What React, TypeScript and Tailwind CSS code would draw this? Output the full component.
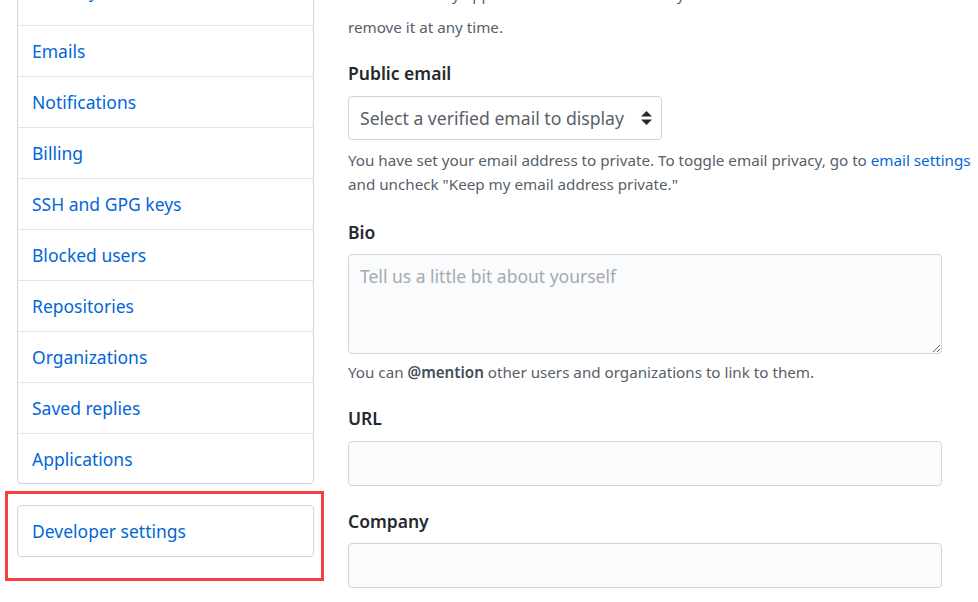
import { useState } from "react"

const navItems = [
  "Security",
  "Emails",
  "Notifications",
  "Billing",
  "SSH and GPG keys",
  "Blocked users",
  "Repositories",
  "Organizations",
  "Saved replies",
  "Applications",
]

function SelectArrows() {
  return (
    <svg width="11" height="14" viewBox="0 0 11 14" className="shrink-0">
      <path d="M5.5 0 L11 5.5 H0 Z" fill="#24292e" />
      <path d="M5.5 14 L11 8.5 H0 Z" fill="#24292e" />
    </svg>
  )
}

export default function App() {
  const [bio, setBio] = useState("")

  return (
    <div
      className="relative w-[978px] h-[602px] overflow-hidden bg-white"
      style={{ fontFamily: '"Noto Sans", "Open Sans", sans-serif' }}
    >
      <div className="flex">
        {/* Sidebar */}
        <div className="w-[297px] ml-[17px] shrink-0">
          <div className="-mt-[26px] border border-[#d1d5da] rounded-b-[4px] bg-white">
            {navItems.map((item, i) => (
              <div
                key={item}
                className={
                  "flex items-center pl-[14px] text-[17.5px] text-[#0366d6] " +
                  (i < navItems.length - 1 ? "h-[51px] border-b border-[#e1e4e8]" : "h-[49px] pt-[2px]")
                }
              >
                <span className={i === 0 ? "relative -top-[9px]" : ""}>{item}</span>
              </div>
            ))}
          </div>

          <div className="mt-[21px] h-[52px] border border-[#d1d5da] rounded-[4px] flex items-center pl-[14px] text-[17.5px] text-[#0366d6]">
            Developer settings
          </div>
        </div>

        {/* Main form */}
        <div className="ml-[34px] w-[594px] shrink-0 -mt-[9px] text-[#586069]">
          <p className="text-[15.2px] leading-[24px] w-[640px]">
            <span className="block relative -top-[9px]">
              Your name may appear around GitHub where you contribute or are mentioned. You
            </span>
            <span className="block">remove it at any time.</span>
          </p>

          <div className="mt-[22px] text-[17.5px] leading-[24px] font-semibold text-[#24292e]">
            Public email
          </div>
          <div className="mt-[11px] w-[314px] h-[44px] border border-[#d1d5da] rounded-[4px] bg-white flex items-center justify-between pl-[11px] pr-[9px]">
            <span className="text-[17.6px] text-[#586069]">Select a verified email to display</span>
            <SelectArrows />
          </div>
          <p className="mt-[8px] text-[15.2px] leading-[24px] w-[640px]">
            You have set your email address to private. To toggle email privacy, go to{" "}
            <span className="text-[#0366d6]">email settings</span>
            <br />
            and uncheck "Keep my email address private."
          </p>

          <div className="mt-[24px] text-[17.5px] leading-[24px] font-semibold text-[#24292e]">
            Bio
          </div>
          <textarea
            value={bio}
            onChange={(e) => setBio(e.target.value)}
            placeholder="Tell us a little bit about yourself"
            className="block mt-[10px] w-full h-[100px] border border-[#d1d5da] rounded-[4px] bg-[#fafbfc] px-[11px] pt-[9px] pb-[8px] text-[17.5px] leading-[24px] text-[#24292e] placeholder:text-[#a3aab1] outline-none"
          />
          <p className="mt-[6px] text-[15.2px] leading-[24px]">
            You can <span className="font-semibold text-[#444d56]">@mention</span> other users and
            organizations to link to them.
          </p>

          <div className="mt-[22px] text-[17.5px] leading-[24px] font-semibold text-[#24292e]">
            URL
          </div>
          <div className="mt-[11px] w-full h-[45px] border border-[#d1d5da] rounded-[4px] bg-[#fafbfc]" />

          <div className="mt-[23px] text-[17.5px] leading-[24px] font-semibold text-[#24292e]">
            Company
          </div>
          <div className="mt-[10px] w-full h-[45px] border border-[#d1d5da] rounded-[4px] bg-[#fafbfc]" />
          <p className="mt-[8px] text-[15.2px] leading-[24px]">
            You can <span className="font-semibold text-[#444d56]">@mention</span> your company's
            GitHub organization to link it.
          </p>
        </div>
      </div>

      {/* highlight annotation */}
      <div className="absolute left-[5px] top-[491px] w-[319px] h-[90px] border-[3px] border-[#f43f3f] pointer-events-none" />
    </div>
  )
}
